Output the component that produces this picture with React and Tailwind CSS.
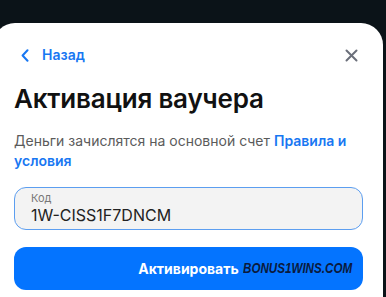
export default function App() {
  return (
    <div
      className="w-[386px] h-[297px] overflow-hidden bg-[#0b1318] pt-[23px]"
      style={{ fontFamily: "Inter, 'Noto Sans', sans-serif" }}
    >
      <div className="-ml-[7px] w-[390px] h-[300px] bg-white rounded-t-[22px] pl-[21px] pr-[20px] pt-[22px]">
        <div className="flex items-center justify-between h-[20px]">
          <div className="flex items-center gap-[13px] pl-[7px]">
            <svg width="8" height="13" viewBox="0 0 8 13" fill="none">
              <path d="M6.5 1.2 L1.6 6.5 L6.5 11.8" stroke="#1877f2" strokeWidth="2" strokeLinecap="round" strokeLinejoin="round" />
            </svg>
            <span className="text-[14px] font-semibold text-[#1877f2] leading-[20px]">Назад</span>
          </div>
          <svg width="13" height="13" viewBox="0 0 13 13" fill="none" className="mr-[5px]">
            <path d="M1.5 1.5 L11.5 11.5 M11.5 1.5 L1.5 11.5" stroke="#6b6f7a" strokeWidth="2" strokeLinecap="round" />
          </svg>
        </div>
        <h1 className="mt-[18px] text-[26px] leading-[32px] font-semibold text-[#111] tracking-[-0.2px]">
          Активация ваучера
        </h1>
        <p className="mt-[16px] text-[14px] leading-[20px] text-[#5b5b5b]">
          Деньги зачислятся на основной счет{" "}
          <span className="font-semibold text-[#1877f2]">Правила и условия</span>
        </p>
        <div className="mt-[16px] h-[43px] rounded-[12px] border border-[#5c9ef0] bg-[#f3f3f3] pl-[16px] flex flex-col justify-center">
          <span className="text-[11px] leading-[13px] text-[#777]">Код</span>
          <span className="text-[16px] leading-[20px] text-[#222]">1W-CISS1F7DNCM</span>
        </div>
        <div className="relative mt-[17px] h-[43px] rounded-[12px] bg-[#0474ff] flex items-center justify-center">
          <span className="text-[14px] font-bold text-white leading-[20px]">Активировать</span>
          <span
            className="absolute left-[229px] top-[12px] text-[14px] leading-[18px] font-bold italic text-[#0b1a3d] origin-left scale-x-[0.83] whitespace-nowrap"
            style={{ fontFamily: "'Liberation Sans', Arial, sans-serif" }}
          >
            BONUS1WINS.COM
          </span>
        </div>
      </div>
    </div>
  );
}
